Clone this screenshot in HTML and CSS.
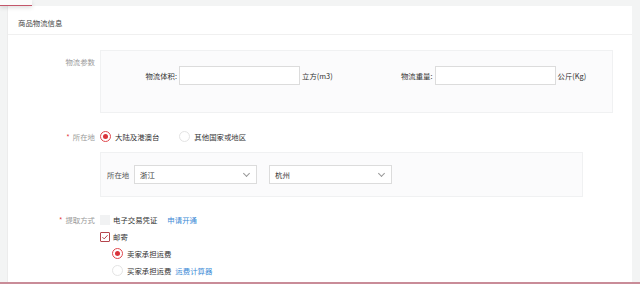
FILE: index.html
```html
<!DOCTYPE html>
<html lang="zh-CN">
<head>
<meta charset="utf-8">
<title>商品物流信息</title>
<link rel="stylesheet" href="styles.css">
</head>
<body>
<div class="tab-overlay"></div>
<div class="page">
  <div class="card">
    <div class="card-header">商品物流信息</div>
    <div class="card-body">
      <div class="form-row">
        <div class="label label-top">物流参数</div>
        <div class="panel panel-params">
          <div class="field-group">
            <span class="field-label">物流体积:</span>
            <span class="input"></span>
            <span class="unit">立方(m3)</span>
          </div>
          <div class="field-group">
            <span class="field-label">物流重量:</span>
            <span class="input"></span>
            <span class="unit">公斤(Kg)</span>
          </div>
        </div>
      </div>

      <div class="form-row row-loc">
        <div class="label"><span class="req">*</span>所在地</div>
        <div class="line">
          <span class="radio checked"></span><span class="text">大陆及港澳台</span>
          <span class="radio second"></span><span class="text">其他国家或地区</span>
        </div>
      </div>

      <div class="form-row">
        <div class="label"></div>
        <div class="panel panel-loc">
          <span class="loc-label">所在地</span>
          <span class="select"><span class="sel-text">浙江</span><span class="chev"></span></span>
          <span class="select"><span class="sel-text">杭州</span><span class="chev"></span></span>
        </div>
      </div>

      <div class="form-row row-take">
        <div class="label"><span class="req">*</span>提取方式</div>
        <div class="options">
          <div class="line">
            <span class="checkbox disabled"></span><span class="text">电子交易凭证</span>
            <span class="link link-apply">申请开通</span>
          </div>
          <div class="line">
            <span class="checkbox checked"><svg width="8" height="8" viewBox="0 0 8 8"><path d="M1.4 4.1 L3.2 5.9 L6.6 2.2" fill="none" stroke="#b5454d" stroke-width="1"/></svg></span><span class="text">邮寄</span>
          </div>
          <div class="line sub">
            <span class="radio checked"></span><span class="text">卖家承担运费</span>
          </div>
          <div class="line sub">
            <span class="radio"></span><span class="text">买家承担运费</span>
            <span class="link link-calc">运费计算器</span>
          </div>
        </div>
      </div>
    </div>
  </div>
</div>
<div class="bottom-line"></div>
</body>
</html>
```

FILE: styles.css
```css
* { box-sizing: border-box; }
html, body { margin: 0; padding: 0; }
body {
  width: 640px;
  height: 284px;
  overflow: hidden;
  position: relative;
  background: #f3f4f4;
  font-family: "Noto Sans CJK SC", "Noto Sans", sans-serif;
  font-size: 7.4px;
  color: #333;
}
.tab-overlay {
  position: absolute;
  left: 0;
  top: 0;
  width: 32px;
  height: 6px;
  background: #fbfbfb;
  border-bottom: 1px solid #c3566a;
  box-shadow: 0 2px 4px rgba(0,0,0,0.12);
  z-index: 2;
}
.bottom-line {
  position: absolute;
  left: 0;
  right: 0;
  bottom: 0;
  height: 2px;
  background: #c98c98;
}
.page {
  padding: 6px 8px 0 7px;
  height: 284px;
}
.card {
  background: #fff;
  height: 100%;
  border-left: 1px solid #ececec;
}
.card-header {
  height: 29px;
  padding: 5px 0 0 10px;
  display: flex;
  align-items: center;
  border-bottom: 1px solid #f0f0f0;
  color: #444;
}
.card-body {
  padding-top: 15px;
}
.form-row {
  display: flex;
}
.label {
  width: 87px;
  flex: none;
  text-align: right;
  color: #999;
  margin-right: 5px;
  display: flex;
  align-items: center;
  justify-content: flex-end;
  height: 17px;
}
.label-top {
  height: auto;
  align-items: flex-start;
  padding-top: 6px;
}
.req { color: #e4393c; margin-right: 3px; }
.panel {
  background: #fbfbfc;
  border: 1px solid #f0f1f2;
}
.panel-params {
  width: 513px;
  height: 63px;
  display: flex;
  align-items: flex-start;
  padding-top: 15px;
}
.field-group {
  display: flex;
  align-items: center;
  width: 256px;
}
.field-label {
  width: 78px;
  text-align: right;
  padding-right: 2px;
}
.input {
  width: 121px;
  height: 19px;
  border: 1px solid #dcdcdc;
  background: #fff;
}
.unit { margin-left: 2px; }
.row-loc { margin-top: 15px; }
.line {
  display: flex;
  align-items: center;
  height: 17px;
}
.radio {
  width: 11px;
  height: 11px;
  border-radius: 50%;
  border: 1px solid #e4e4e4;
  background: #fff;
  flex: none;
  position: relative;
}
.radio.checked { border-color: #e0474c; }
.radio.checked::after {
  content: "";
  position: absolute;
  left: 2px;
  top: 2px;
  width: 5px;
  height: 5px;
  border-radius: 50%;
  background: #d9343b;
}
.radio.second { margin-left: 20px; }
.text { margin-left: 4px; }
.panel-loc {
  margin-top: 7px;
  width: 483px;
  height: 45px;
  display: flex;
  align-items: center;
  padding-left: 6px;
}
.loc-label { width: 27px; color: #555; }
.select {
  width: 123px;
  height: 19px;
  border: 1px solid #dcdcdc;
  background: #fff;
  display: flex;
  align-items: center;
  justify-content: space-between;
  padding: 0 7px 0 5px;
  margin-right: 12px;
}
.chev {
  width: 5px;
  height: 5px;
  border-right: 1px solid #999;
  border-bottom: 1px solid #999;
  transform: rotate(45deg);
  margin-top: -3px;
}
.row-take { margin-top: 14px; }
.options { display: flex; flex-direction: column; }
.options .line { height: 17px; }
.checkbox {
  width: 10px;
  height: 10px;
  flex: none;
  display: flex;
  align-items: center;
  justify-content: center;
}
.checkbox.disabled { background: #f1f2f3; }
.checkbox.checked { border: 1px solid #b5454d; background: #fff; border-radius: 1px; }
.checkbox + .text { margin-left: 3px; }
.link { color: #3d8bd6; }
.link-apply { margin-left: 10px; }
.link-calc { margin-left: 4px; }
.line.sub { padding-left: 12px; }
```
